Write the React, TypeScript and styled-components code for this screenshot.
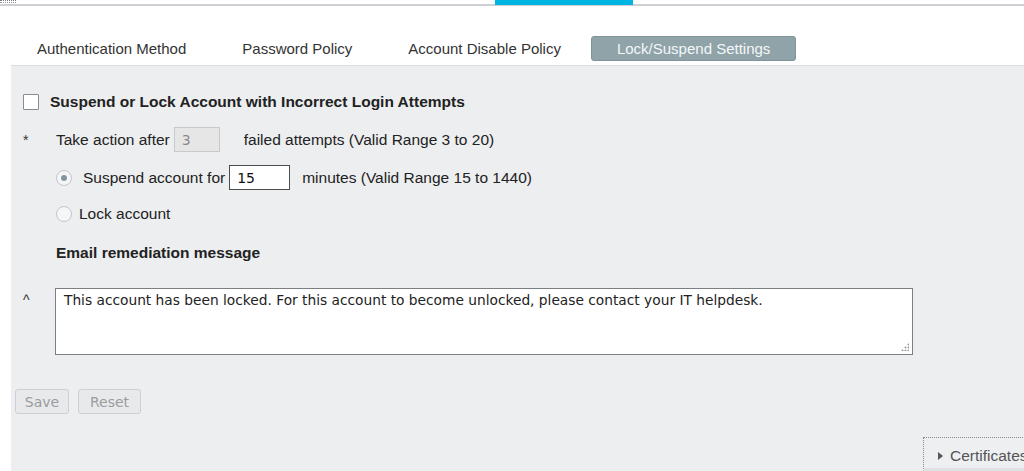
import React from "react";
import styled, { createGlobalStyle } from "styled-components";

const Global = createGlobalStyle`
  html, body { margin: 0; padding: 0; background: #ffffff; overflow: hidden; }
  body { font-family: "Liberation Sans", Arial, sans-serif; color: #222; }
  * { box-sizing: border-box; }
`;

const Page = styled.div`
  width: 1024px;
  height: 471px;
  display: flex;
  flex-direction: column;
  position: relative;
`;

const TopBar = styled.div`
  height: 6px;
  border-bottom: 2px solid #cfd0d6;
  display: flex;
`;

const TopGrip = styled.div`
  width: 16px;
  height: 3px;
  border-top: 1px dotted #777;
  border-bottom: 1px dotted #999;
`;

const ActiveStrip = styled.div`
  margin-left: 479px;
  width: 138px;
  height: 5px;
  background: #00b5e2;
`;

const Tabs = styled.div`
  display: flex;
  gap: 4px;
  margin: 30px 0 0 11px;
  height: 25px;
`;

const Tab = styled.div<{ $active?: boolean }>`
  height: 25px;
  padding: 0 25px;
  display: flex;
  align-items: center;
  font-size: 15px;
  color: ${(p) => (p.$active ? "#f4f7f8" : "#333")};
  background: ${(p) => (p.$active ? "#8fa3a8" : "transparent")};
  border: 1px solid ${(p) => (p.$active ? "#7f9398" : "transparent")};
  border-radius: 3px;
  white-space: nowrap;
`;

const Panel = styled.div`
  margin: 4px 0 0 11px;
  flex: 1;
  background: #edeef0;
  border-top: 1px solid #dcdde2;
  padding: 26px 0 0 12px;
  display: flex;
  flex-direction: column;
`;

const Row = styled.div<{ $top?: number; $h?: number }>`
  display: flex;
  align-items: center;
  height: ${(p) => p.$h ?? 25}px;
  margin-top: ${(p) => p.$top ?? 0}px;
  font-size: 15.5px;
  color: #222;
  white-space: nowrap;
`;

const Check = styled.span`
  width: 16px;
  height: 16px;
  background: #fff;
  border: 1px solid #8c8c8c;
  border-radius: 1px;
  margin-right: 11px;
`;

const Bold = styled.span`
  font-weight: bold;
  font-size: 15.5px;
  color: #222;
`;

const Marker = styled.span`
  width: 33px;
  font-size: 14px;
  color: #333;
`;

const Text = styled.span<{ $ml?: number }>`
  margin-left: ${(p) => p.$ml ?? 0}px;
`;

const NumBox = styled.span<{ $disabled?: boolean; $w: number }>`
  width: ${(p) => p.$w}px;
  height: 25px;
  margin-left: 4px;
  display: flex;
  align-items: center;
  padding-left: 7px;
  font-family: "DejaVu Sans", Verdana, sans-serif;
  font-size: 14px;
  color: ${(p) => (p.$disabled ? "#8a8a8a" : "#111")};
  background: ${(p) => (p.$disabled ? "#e6e6e6" : "#fff")};
  border: 1px solid ${(p) => (p.$disabled ? "#c9c9c9" : "#4d4d4d")};
`;

const Radio = styled.span<{ $checked?: boolean }>`
  width: 16px;
  height: 16px;
  border-radius: 50%;
  border: 1px solid #c2c6ca;
  background: #f5f6f7;
  display: flex;
  align-items: center;
  justify-content: center;
  &::after {
    content: "";
    width: 6px;
    height: 6px;
    border-radius: 50%;
    background: ${(p) => (p.$checked ? "#8595a0" : "transparent")};
  }
`;

const MsgRow = styled.div`
  display: flex;
  margin-top: 25px;
  align-items: flex-start;
`;

const Caret = styled.span`
  width: 32px;
  padding-top: 4px;
  font-size: 14px;
  color: #333;
`;

const AreaWrap = styled.div`
  position: relative;
  width: 858px;
  height: 67px;
  &::after {
    content: "";
    position: absolute;
    right: 4px;
    bottom: 4px;
    width: 8px;
    height: 8px;
    background:
      radial-gradient(circle, #9a9a9a 0.9px, transparent 1.1px) 6px 0 / 3px 3px no-repeat,
      radial-gradient(circle, #9a9a9a 0.9px, transparent 1.1px) 3px 3px / 3px 3px no-repeat,
      radial-gradient(circle, #9a9a9a 0.9px, transparent 1.1px) 6px 3px / 3px 3px no-repeat,
      radial-gradient(circle, #9a9a9a 0.9px, transparent 1.1px) 0 6px / 3px 3px no-repeat,
      radial-gradient(circle, #9a9a9a 0.9px, transparent 1.1px) 3px 6px / 3px 3px no-repeat,
      radial-gradient(circle, #9a9a9a 0.9px, transparent 1.1px) 6px 6px / 3px 3px no-repeat;
    pointer-events: none;
  }
`;

const MessageArea = styled.textarea`
  width: 100%;
  height: 100%;
  display: block;
  border: 1px solid #7b7f82;
  border-radius: 0;
  background: #fff;
  padding: 3px 8px;
  font-family: "DejaVu Sans", Verdana, sans-serif;
  font-size: 13.75px;
  line-height: 17px;
  color: #222;
  outline: none;
  resize: none;
`;

const Buttons = styled.div`
  display: flex;
  gap: 9px;
  margin: 34px 0 0 -8px;
`;

const Button = styled.button<{ $w: number }>`
  width: ${(p) => p.$w}px;
  height: 25px;
  padding: 0;
  background: #e8e9eb;
  border: 1px solid #cdd0d3;
  border-radius: 3px;
  font-family: "DejaVu Sans", Verdana, sans-serif;
  font-size: 14px;
  color: #9a9c9e;
`;

const Dock = styled.div`
  position: absolute;
  left: 923px;
  top: 437px;
  width: 140px;
  height: 34px;
  border-top: 1px dotted #8a8a8a;
  border-left: 1px dotted #8a8a8a;
  border-bottom: 3px solid #dfe1e5;
  background: #eeeff1;
  display: flex;
  align-items: flex-start;
  padding: 9px 0 0 14px;
  font-size: 15.5px;
  color: #555;
  gap: 7px;
  white-space: nowrap;
`;

const Tri = styled.span`
  width: 0;
  height: 0;
  margin-top: 5px;
  border-top: 4px solid transparent;
  border-bottom: 4px solid transparent;
  border-left: 5px solid #555;
`;

export default function App() {
  return (
    <Page>
      <Global />
      <TopBar>
        <TopGrip />
        <ActiveStrip />
      </TopBar>
      <Tabs>
        <Tab>Authentication Method</Tab>
        <Tab>Password Policy</Tab>
        <Tab>Account Disable Policy</Tab>
        <Tab $active>Lock/Suspend Settings</Tab>
      </Tabs>
      <Panel>
        <Row $h={20}>
          <Check />
          <Bold>Suspend or Lock Account with Incorrect Login Attempts</Bold>
        </Row>
        <Row $top={15}>
          <Marker>*</Marker>
          <Text>Take action after</Text>
          <NumBox $disabled $w={46}>3</NumBox>
          <Text $ml={24}>failed attempts (Valid Range 3 to 20)</Text>
        </Row>
        <Row $top={13}>
          <Marker />
          <Radio $checked />
          <Text $ml={11}>Suspend account for</Text>
          <NumBox $w={61}>15</NumBox>
          <Text $ml={12}>minutes (Valid Range 15 to 1440)</Text>
        </Row>
        <Row $top={14} $h={20}>
          <Marker />
          <Radio />
          <Text $ml={7}>Lock account</Text>
        </Row>
        <Row $top={19} $h={20}>
          <Marker />
          <Bold>Email remediation message</Bold>
        </Row>
        <MsgRow>
          <Caret>^</Caret>
          <AreaWrap>
            <MessageArea
              readOnly
              defaultValue="This account has been locked. For this account to become unlocked, please contact your IT helpdesk."
            />
          </AreaWrap>
        </MsgRow>
        <Buttons>
          <Button $w={54}>Save</Button>
          <Button $w={63}>Reset</Button>
        </Buttons>
      </Panel>
      <Dock>
        <Tri />
        <span>Certificates</span>
      </Dock>
    </Page>
  );
}
